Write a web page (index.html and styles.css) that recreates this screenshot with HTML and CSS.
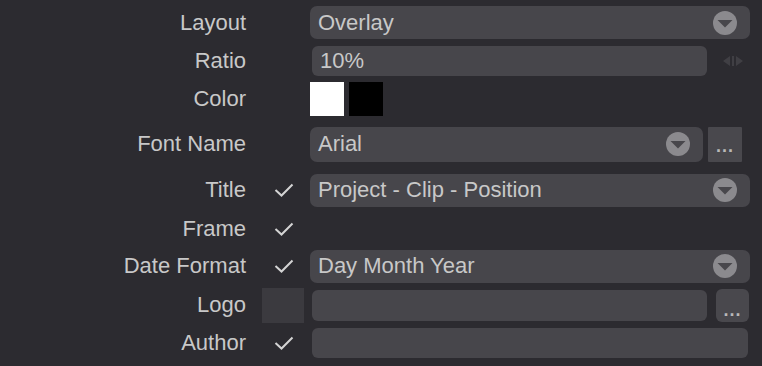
FILE: index.html
```html
<html>
<head>
<meta charset="utf-8">
<link rel="stylesheet" href="styles.css">
</head>
<body>

<div class="form">

	<div class="row">
		<div class="label">Layout</div>
		<div class="check"></div>
		<div class="ctrl">
			<div class="select">
				<span class="value">Overlay</span>
				<svg class="drop" width="24" height="24" viewBox="0 0 24 24"><circle cx="12" cy="12" r="12" fill="#8b8a8e"/><path d="M4.5 9 H19.5 L12 16.5 Z" fill="#48474c"/></svg>
			</div>
		</div>
	</div>

	<div class="row">
		<div class="label">Ratio</div>
		<div class="check"></div>
		<div class="ctrl">
			<div class="input narrow"><span class="value">10%</span></div>
			<svg class="slide" width="20" height="10" viewBox="0 0 20 10"><path d="M0 5 L7 0 V10 Z M13 0 L20 5 L13 10 Z" fill="#403f44"/><rect x="9" y="0" width="2" height="10" fill="#403f44"/></svg>
		</div>
	</div>

	<div class="row">
		<div class="label">Color</div>
		<div class="check"></div>
		<div class="ctrl">
			<div class="swatch white"></div>
			<div class="swatch black"></div>
		</div>
	</div>

	<div class="row">
		<div class="label">Font Name</div>
		<div class="check"></div>
		<div class="ctrl">
			<div class="select font">
				<span class="value">Arial</span>
				<svg class="drop" width="24" height="24" viewBox="0 0 24 24"><circle cx="12" cy="12" r="12" fill="#8b8a8e"/><path d="M4.5 9 H19.5 L12 16.5 Z" fill="#48474c"/></svg>
			</div>
			<div class="more square">...</div>
		</div>
	</div>

	<div class="row">
		<div class="label">Title</div>
		<div class="check"><svg width="20" height="14" viewBox="0 0 20 14"><path d="M1.5 7 L7.5 12.5 L18.5 1.5" fill="none" stroke="#d4d4d4" stroke-width="2"/></svg></div>
		<div class="ctrl">
			<div class="select">
				<span class="value">Project - Clip - Position</span>
				<svg class="drop" width="24" height="24" viewBox="0 0 24 24"><circle cx="12" cy="12" r="12" fill="#8b8a8e"/><path d="M4.5 9 H19.5 L12 16.5 Z" fill="#48474c"/></svg>
			</div>
		</div>
	</div>

	<div class="row">
		<div class="label">Frame</div>
		<div class="check"><svg width="20" height="14" viewBox="0 0 20 14"><path d="M1.5 7 L7.5 12.5 L18.5 1.5" fill="none" stroke="#d4d4d4" stroke-width="2"/></svg></div>
		<div class="ctrl"></div>
	</div>

	<div class="row">
		<div class="label">Date Format</div>
		<div class="check"><svg width="20" height="14" viewBox="0 0 20 14"><path d="M1.5 7 L7.5 12.5 L18.5 1.5" fill="none" stroke="#d4d4d4" stroke-width="2"/></svg></div>
		<div class="ctrl">
			<div class="select">
				<span class="value">Day Month Year</span>
				<svg class="drop" width="24" height="24" viewBox="0 0 24 24"><circle cx="12" cy="12" r="12" fill="#8b8a8e"/><path d="M4.5 9 H19.5 L12 16.5 Z" fill="#48474c"/></svg>
			</div>
		</div>
	</div>

	<div class="row">
		<div class="label">Logo</div>
		<div class="check"><div class="logo-box"></div></div>
		<div class="ctrl">
			<div class="input narrow logo"></div>
			<div class="more round">...</div>
		</div>
	</div>

	<div class="row">
		<div class="label">Author</div>
		<div class="check"><svg width="20" height="14" viewBox="0 0 20 14"><path d="M1.5 7 L7.5 12.5 L18.5 1.5" fill="none" stroke="#d4d4d4" stroke-width="2"/></svg></div>
		<div class="ctrl">
			<div class="input wide"></div>
		</div>
	</div>

</div>

</body>
</html>
```

FILE: styles.css
```css
body {
	margin: 0;
	padding: 0;
	background-color: #2c2b30;
	font-family: "Liberation Sans", Arial, sans-serif;
	font-size: 22px;
	color: #c8c8c8;
}

.form {
	display: grid;
	grid-template-rows: 41px 36px 40px 50px 42px 36px 38px 40px 36px;
	padding-top: 2px;
}

.row {
	display: flex;
	align-items: center;
}

.label {
	width: 246px;
	text-align: right;
}

.check {
	width: 42px;
	margin-left: 16px;
	margin-right: 6px;
	display: flex;
	justify-content: center;
	align-items: center;
}

.check svg {
	margin-left: 1px;
}

.ctrl {
	width: 440px;
	display: flex;
	align-items: center;
}

.select {
	flex: 1;
	height: 33px;
	background-color: #47464b;
	border-radius: 7px;
	display: flex;
	align-items: center;
	padding: 0 13px 0 8px;
}

.select .value {
	flex: 1;
}

.select.font {
	flex: none;
	width: 372px;
	height: 35px;
}

.input {
	height: 30px;
	background-color: #47464b;
	border-radius: 6px;
	margin-left: 2px;
	display: flex;
	align-items: center;
	padding-left: 8px;
}

.input.narrow {
	width: 387px;
}

.input.logo {
	height: 31px;
}

.input.wide {
	width: 428px;
}

.slide {
	margin-left: 16px;
}

.swatch {
	width: 34px;
	height: 34px;
}

.white {
	background-color: #ffffff;
}

.black {
	background-color: #000000;
	margin-left: 5px;
}

.more {
	background-color: #49484d;
	color: #b8b8b8;
	font-size: 18px;
	font-weight: bold;
	letter-spacing: 1px;
	display: flex;
	justify-content: center;
	align-items: center;
	box-sizing: border-box;
}

.more.square {
	width: 34px;
	height: 35px;
	margin-left: 5px;
	border-radius: 1px;
	padding-top: 4px;
}

.more.round {
	width: 33px;
	height: 33px;
	margin-left: 9px;
	border-radius: 6px;
	padding-top: 10px;
}

.logo-box {
	width: 42px;
	height: 35px;
	background-color: #3b3a3f;
}
```
